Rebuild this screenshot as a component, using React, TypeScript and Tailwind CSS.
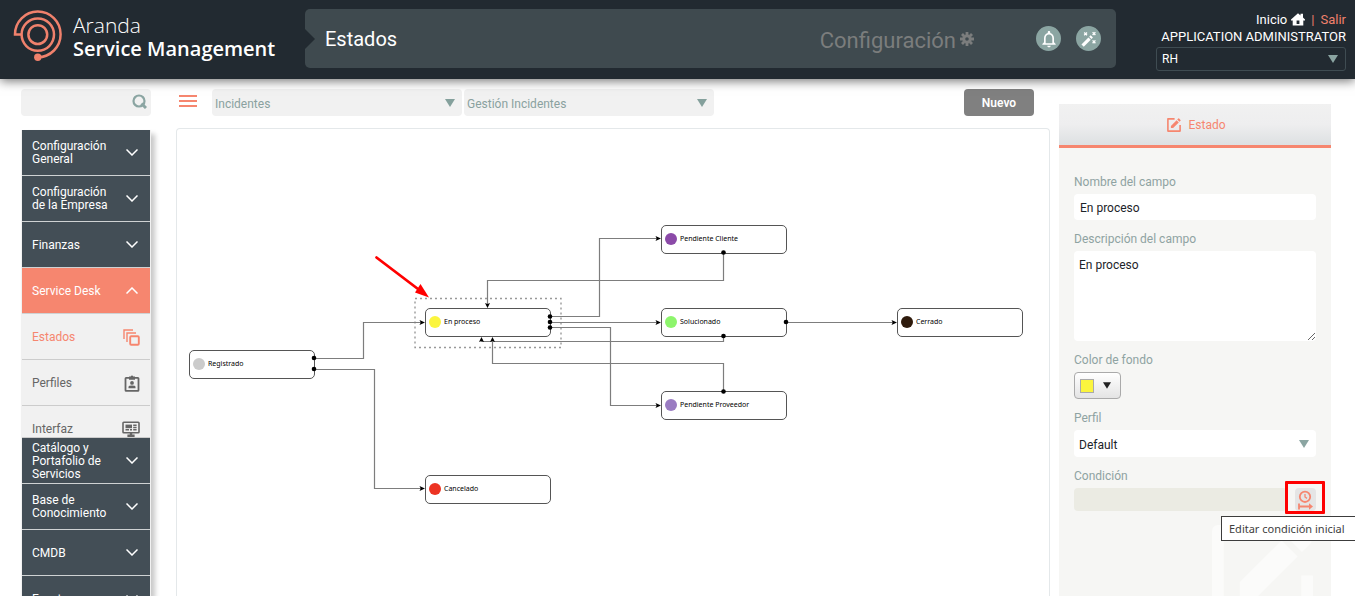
import React from "react";
import { MdNotificationsNone } from "react-icons/md";

type NodeDef = { label: string; color: string; place: string };

const nodes: NodeDef[] = [
  { label: "Registrado", color: "bg-[#cbcbcb]", place: "left-[12px] top-[221px]" },
  { label: "En proceso", color: "bg-[#fbf53e]", place: "left-[248px] top-[179px]" },
  { label: "Pendiente Cliente", color: "bg-[#8b4aa8]", place: "left-[484px] top-[96px]" },
  { label: "Solucionado", color: "bg-[#8df56c]", place: "left-[484px] top-[179px]" },
  { label: "Pendiente Proveedor", color: "bg-[#9a7cc2]", place: "left-[484px] top-[262px]" },
  { label: "Cerrado", color: "bg-[#2e1a0c]", place: "left-[720px] top-[179px]" },
  { label: "Cancelado", color: "bg-[#ec3323]", place: "left-[248px] top-[346px]" },
];

const edges = [
  "M137 229.5H186.5V193.5H246",
  "M137 240.5H197.5V359.5H246",
  "M373 187.5H422.5V109.5H482",
  "M373 193.5H482",
  "M373 198.5H433.5V276.5H482",
  "M546.5 124V151.5H310.5V177",
  "M546.5 207V212.5H304.5V210",
  "M546.5 262V234.5H315.5V210",
  "M609 193.5H718",
];

const dots: [number, number][] = [
  [137, 229], [137, 240], [373, 187.5], [373, 193], [373, 198.5],
  [546.5, 123.5], [546.5, 207], [546.5, 262.5], [609, 193],
];

const rightArrows: [number, number][] = [[248, 193.5], [248, 359.5], [484, 109.5], [484, 193.5], [484, 276.5], [720, 193.5]];

function Triangle({ className }: { className: string }) {
  return (
    <svg viewBox="0 0 10 8" className={className} aria-hidden="true">
      <path d="M0 0H10L5 8Z" fill="currentColor" />
    </svg>
  );
}

function Logo() {
  return (
    <svg viewBox="0 0 50 52" className="h-[52px] w-[50px] shrink-0 text-[#f0816c]" fill="none" stroke="currentColor" strokeWidth="2.5" aria-hidden="true">
      <circle cx="24.8" cy="25.6" r="9.4" />
      <circle cx="24.8" cy="25.6" r="16.2" />
      <path d="M8.600 25.600H2A22.800 22.800 0 1 1 24.800 48.200" />
      <circle cx="24.8" cy="48.2" r="3.700" fill="currentColor" stroke="none" />
    </svg>
  );
}

function Gear() {
  return (
    <svg viewBox="0 0 14 14" className="h-3.5 w-3.5" fill="none" stroke="currentColor" aria-hidden="true">
      <circle cx="7" cy="7" r="3.2" strokeWidth="2.8" />
      <path strokeWidth="2.8" d="M7 0V3M7 11V14M0 7H3M11 7H14M2 2L4.2 4.2M9.8 9.8L12 12M12 2L9.8 4.2M4.2 9.8L2 12" />
    </svg>
  );
}

function Wand() {
  return (
    <svg viewBox="0 0 16 16" className="h-4 w-4" fill="none" stroke="currentColor" aria-hidden="true">
      <path strokeWidth="3.2" d="M1.6 14.6L8.6 7.6" />
      <path strokeWidth="3.2" d="M9.3 6.9L10.8 5.4" />
      <path strokeWidth="1.3" d="M3.2 1.5L6 4.3M6 1.5L3.2 4.3M11.6 1.2L14.4 4M14.4 1.2L11.6 4M11.6 9.4L14.4 12.2M14.4 9.4L11.6 12.2" />
    </svg>
  );
}

function House() {
  return (
    <svg viewBox="0 0 14 13" className="h-[13px] w-3.5" fill="currentColor" aria-hidden="true">
      <path fillRule="evenodd" d="M7 0.300L9.500 2.400V0.800H12V4.600L14 6.400V7.400H12.300V12.500H1.700V7.400H0V6.400ZM5.600 7.400V11H8.400V7.400Z" />
    </svg>
  );
}

function EditIcon({ className }: { className: string }) {
  return (
    <svg viewBox="0 0 16 16" className={className} fill="none" stroke="currentColor" aria-hidden="true">
      <path strokeWidth="1.6" strokeLinejoin="round" d="M8.6 1.9H1.9V14.1H14.1V8" />
      <path fill="currentColor" stroke="none" d="M4.9 11.100V8.900L10.600 3.200L12.800 5.400L7.100 11.100ZM11.200 2.600L12.300 1.500Q12.700 1.100 13.100 1.500L14.500 2.900Q14.900 3.300 14.500 3.700L13.400 4.800Z" />
    </svg>
  );
}

function Chevron({ up }: { up?: boolean }) {
  return (
    <svg viewBox="0 0 12 7" className="h-[7px] w-3 shrink-0" fill="none" stroke="#fff" strokeWidth="1.5" aria-hidden="true">
      <path d={up ? "M0.5 6.500L6 1L11.5 6.500" : "M0.5 0.500L6 6L11.5 0.500"} />
    </svg>
  );
}

function CopiesIcon() {
  return (
    <svg viewBox="0 0 17 17" className="h-[17px] w-[17px]" fill="none" stroke="currentColor" strokeWidth="1.4" aria-hidden="true">
      <path d="M1 10V1H10M4 13V4H13" />
      <rect x="7.2" y="7.2" width="8.6" height="8.6" rx="1" strokeWidth="1.9" />
    </svg>
  );
}

function BadgeIcon() {
  return (
    <svg viewBox="0 0 16 17" className="h-[17px] w-4" fill="none" stroke="currentColor" aria-hidden="true">
      <rect x="1.5" y="2.800" width="13" height="13" rx="0.600" strokeWidth="1.800" />
      <path fill="currentColor" stroke="none" d="M5 1.600H6.600L8 0.200L9.400 1.600H11V4.800H5ZM4.500 13.200V12Q4.500 10.600 8 10.600Q11.500 10.600 11.500 12V13.200Z" />
      <circle cx="8" cy="7.900" r="1.900" fill="currentColor" stroke="none" />
    </svg>
  );
}

function MonitorIcon() {
  return (
    <svg viewBox="0 0 18 16" className="h-4 w-[18px]" fill="none" stroke="currentColor" aria-hidden="true">
      <rect x="1" y="1.200" width="16" height="10.600" rx="0.800" strokeWidth="1.600" />
      <path strokeWidth="3.600" d="M3.500 5.400H10" />
      <path strokeWidth="1.500" d="M3.500 8.800H7M8 8.800H10M11.200 4.300H14.600M11.200 6.500H14.600M11.200 8.800H14.600" />
      <path strokeWidth="2.400" d="M9 11.600V15M5.400 14.800H12.600" />
    </svg>
  );
}

function MenuButton({ label, open }: { label: string; open?: boolean }) {
  return (
    <button
      type="button"
      aria-expanded={!!open}
      className={
        "flex h-[46px] w-full shrink-0 items-center justify-between border-b border-[#cfd2d3] pl-2.5 pr-3 text-left text-xs leading-[13px] text-white " +
        (open ? "bg-[#f6866f]" : "bg-[#434e56]")
      }
    >
      <span className="w-20 pt-px">{label}</span>
      <Chevron up={open} />
    </button>
  );
}

function SubLink({ label, icon, active }: { label: string; icon: React.ReactNode; active?: boolean }) {
  return (
    <a
      href="#"
      className={
        "flex h-[46px] items-center justify-between border-b border-[#cccccc] pl-2.5 pr-2.5 pt-px text-xs " +
        (active ? "text-[#f6866f]" : "text-[#666666]")
      }
    >
      <span>{label}</span>
      {icon}
    </a>
  );
}

function ToolbarSelect({ label, value }: { label: string; value: string }) {
  return (
    <div className="relative w-[250px]">
      <select aria-label={label} className="h-[27px] w-full appearance-none rounded bg-[#f1f1f1] pl-[3px] pr-6 pt-0.5 text-xs text-[#8aa19f]">
        <option>{value}</option>
      </select>
      <Triangle className="pointer-events-none absolute right-[7px] top-2.5 h-2 w-2.5 text-[#84a09c]" />
    </div>
  );
}

function Diagram() {
  return (
    <section aria-label="Diagrama de estados" className="relative min-h-0 flex-1 overflow-hidden rounded-t-sm border border-b-0 border-[#e4e8ea] bg-white">
      {nodes.map((n) => (
        <div key={n.label} className={"absolute flex h-[29px] w-[126px] items-center gap-[3px] rounded-[5px] border border-[#555555] bg-white pb-px pl-[3px] text-[7px] text-black " + n.place}>
          <span className={"h-3 w-3 shrink-0 rounded-full " + n.color} />
          <span className="whitespace-nowrap pt-px font-['Noto_Sans',sans-serif]">{n.label}</span>
        </div>
      ))}
      <svg width="872" height="467" className="absolute left-0 top-0" fill="none" aria-hidden="true">
        <rect x="238" y="169.500" width="146" height="49" stroke="#999999" strokeWidth="1.400" strokeDasharray="2 3" />
        {edges.map((d) => (
          <path key={d} d={d} stroke="#7d7d7d" strokeWidth="1.2" />
        ))}
        {dots.map(([x, y]) => (
          <circle key={`${x}-${y}`} cx={x} cy={y} r="2.3" fill="#000" />
        ))}
        {rightArrows.map(([x, y]) => (
          <path key={`${x}-${y}`} d={`M${x} ${y}l-5.500 -2.500l1.200 2.500l-1.200 2.500Z`} fill="#000" />
        ))}
        <path fill="#000" d="M310.500 179l-2.500 -5l2.500 1l2.500 -1ZM304.500 208l-2.500 5l2.500 -1l2.500 1ZM315.500 208l-2.500 5l2.500 -1l2.500 1Z" />
        <path stroke="#f00" strokeWidth="2.800" strokeLinecap="round" d="M199.500 128.500L241 160" />
        <path fill="#f00" d="M252 168.500L238 163.500L243.500 155Z" />
      </svg>
    </section>
  );
}

const labelClass = "block text-xs leading-4 text-[#8fa3a2]";

export default function App() {
  return (
    <div className="flex h-screen flex-col overflow-hidden bg-white font-[Roboto,'Liberation_Sans',sans-serif]">
      <header className="z-10 flex h-[79px] shrink-0 bg-[#222a31] pl-[13px] pr-[9px] pt-[9px] shadow-[0_2px_10px_rgba(0,0,0,0.55)]">
        <div className="flex w-[292px] shrink-0 gap-2.5">
          <Logo />
          <div className="whitespace-nowrap pt-1 font-['Open_Sans',sans-serif] text-white">
            <div className="text-[21px] font-light leading-6">Aranda</div>
            <div className="text-xl font-semibold leading-6">Service Management</div>
          </div>
        </div>
        <div className="relative flex h-[59px] flex-1 items-center rounded-[5px] bg-[#3f4a4f] pl-5 pr-[15px] text-white">
          <svg viewBox="0 0 10 20" className="absolute left-0 top-5 h-5 w-2.5" aria-hidden="true">
            <path d="M0 0L10 10L0 20Z" fill="#222a31" />
          </svg>
          <h1 className="flex-1 text-xl leading-6">Estados</h1>
          <div className="mr-[62px] flex items-center gap-1 text-[#7b7d7d]">
            <span className="pt-1 text-[22px]">Configuración</span>
            <Gear />
          </div>
          <div className="flex gap-[15px]">
            <button type="button" aria-label="Notificaciones" className="grid h-[25px] w-[25px] place-items-center rounded-full bg-[#8ba5a2]">
              <MdNotificationsNone className="h-5 w-5" />
            </button>
            <button type="button" aria-label="Asistente" className="grid h-[25px] w-[25px] place-items-center rounded-full bg-[#8ba5a2]">
              <Wand />
            </button>
          </div>
        </div>
        <div className="ml-10 w-[190px] shrink-0 text-right text-[13px] leading-[17px] text-white">
          <div className="flex items-center justify-end gap-1 pt-0.5">
            <a href="#" className="flex items-center gap-1">
              Inicio <House />
            </a>
            <span className="px-0.5 text-[#f0816c]">|</span>
            <a href="#" className="text-[#f0816c]">Salir</a>
          </div>
          <div className="whitespace-nowrap">APPLICATION ADMINISTRATOR</div>
          <div className="relative mt-0.5">
            <select aria-label="Proyecto" className="h-6 w-full appearance-none rounded-[3px] border border-[#3f4c52] bg-[#222a31] pl-[5px] text-xs">
              <option>RH</option>
            </select>
            <Triangle className="pointer-events-none absolute right-2 top-2 h-2 w-2.5 text-[#8ba5a2]" />
          </div>
        </div>
      </header>

      <div className="flex min-h-0 flex-1 pl-[21px] pr-6">
        <aside className="flex w-[130px] shrink-0 flex-col pt-2.5">
          <div className="relative">
            <input type="search" aria-label="Buscar" className="h-[27px] w-full rounded bg-[#f1f1f1] pl-2 pr-6 text-xs" />
            <svg viewBox="0 0 15 15" className="pointer-events-none absolute right-1 top-[5px] h-[15px] w-[15px]" fill="none" stroke="#8ba5a2" aria-hidden="true">
              <circle cx="7" cy="7" r="5.500" strokeWidth="2.200" />
              <path d="M9.500 9.500L14 14" strokeWidth="3" />
            </svg>
          </div>
          <nav className="mt-3.5 flex min-h-0 flex-1 flex-col overflow-hidden border-x border-[#f1f1f1] shadow-[4px_4px_5px_rgba(0,0,0,0.22)]">
            <MenuButton label="Configuración General" />
            <MenuButton label="Configuración de la Empresa" />
            <MenuButton label="Finanzas" />
            <MenuButton label="Service Desk" open />
            <div className="h-[124px] shrink-0 overflow-hidden border-b border-[#cccccc] bg-[#f1f1f1]">
              <SubLink label="Estados" icon={<CopiesIcon />} active />
              <SubLink label="Perfiles" icon={<BadgeIcon />} />
              <SubLink label="Interfaz" icon={<MonitorIcon />} />
            </div>
            <MenuButton label="Catálogo y Portafolio de Servicios" />
            <MenuButton label="Base de Conocimiento" />
            <MenuButton label="CMDB" />
            <MenuButton label="Eventos" />
          </nav>
        </aside>

        <main className="ml-[25px] flex min-w-0 flex-1 flex-col pt-2.5">
          <div className="mb-3 flex items-start pl-[3px] pr-4">
            <button type="button" aria-label="Menú" className="mr-[15px] mt-1.5 flex h-3 w-[18px] flex-col justify-between">
              <span className="h-0.5 w-full bg-[#f6866f]" />
              <span className="h-0.5 w-full bg-[#f6866f]" />
              <span className="h-0.5 w-full bg-[#f6866f]" />
            </button>
            <div className="flex gap-0.5">
              <ToolbarSelect label="Tipo" value="Incidentes" />
              <ToolbarSelect label="Modelo" value="Gestión Incidentes" />
            </div>
            <button type="button" className="ml-auto h-[27px] w-[70px] rounded bg-[#808080] text-xs font-semibold text-white">Nuevo</button>
          </div>
          <Diagram />
        </main>

        <form className="relative ml-[9px] mt-[25px] flex w-[272px] shrink-0 flex-col bg-[#f6f6f4]">
          <div className="flex h-11 shrink-0 items-center justify-center gap-1.5 border-b-[3px] border-[#f6866f] bg-linear-to-b from-[#f1f1f1] via-[#eeeeef] to-[#dde0e2] pl-0.5 text-xs text-[#f6866f]">
            <EditIcon className="h-4 w-4" />
            Estado
          </div>
          <div className="pointer-events-none absolute inset-0 overflow-hidden">
            <EditIcon className="absolute -bottom-[38px] right-2.5 h-[117px] w-[117px] text-[#fbfbfa]" />
          </div>
          <div className="relative px-[15px] pt-[26px]">
            <label htmlFor="nombre" className={labelClass}>Nombre del campo</label>
            <input id="nombre" defaultValue="En proceso" className="mt-1 block h-[26px] w-full rounded bg-white px-1.5 pt-0.5 text-xs text-[#1c2329]" />
            <label htmlFor="descripcion" className={labelClass + " mt-[11px]"}>Descripción del campo</label>
            <textarea id="descripcion" defaultValue="En proceso" className="mt-1 block h-[90px] w-full resize rounded bg-white px-[5px] py-1.5 text-xs text-[#1c2329]" />
            <label htmlFor="color" className={labelClass + " mt-[11px]"}>Color de fondo</label>
            <button id="color" type="button" className="mt-1 flex h-[27px] w-[47px] items-center gap-[9px] rounded-sm border border-[#aaaaaa] bg-linear-to-b from-white to-[#e4e4e4] pl-[5px] text-[#222222]">
              <span className="h-3.5 w-3.5 border border-[#aaaaaa] bg-[#fbf53e]" />
              <Triangle className="h-[7px] w-2" />
            </button>
            <label htmlFor="perfil" className={labelClass + " mt-[11px]"}>Perfil</label>
            <div className="relative mt-1">
              <select id="perfil" className="h-[27px] w-full appearance-none rounded bg-white pl-[5px] pt-0.5 text-xs text-[#1c2329]">
                <option>Default</option>
              </select>
              <Triangle className="pointer-events-none absolute right-[7px] top-2.5 h-2 w-2.5 text-[#8ba5a2]" />
            </div>
            <label htmlFor="condicion" className={labelClass + " mt-[11px]"}>Condición</label>
            <div className="mt-1 flex gap-2">
              <input id="condicion" disabled className="h-[23px] min-w-0 flex-1 rounded bg-[#ebebe3]" />
              <div className="relative">
                <button type="button" aria-label="Editar condición inicial" className="grid h-[23px] w-[21px] place-items-center rounded bg-[#e5e5e5] text-[#f6866f]">
                  <svg viewBox="0 0 15 20" className="h-5 w-[15px]" fill="none" stroke="currentColor" aria-hidden="true">
                    <circle cx="7" cy="6.800" r="5.200" strokeWidth="1.800" />
                    <path d="M7 4V7L9 8.400" strokeWidth="1.300" />
                    <path d="M1 13.500V19.500M1.500 16.500H12.500" strokeWidth="1.800" />
                    <path d="M11 13.300L15 16.500L11 19.700Z" fill="currentColor" stroke="none" />
                  </svg>
                </button>
                <div className="pointer-events-none absolute -left-2.5 -top-[7px] h-[33px] w-10 rounded-[1px] border-[3px] border-[#fe0000]" />
                <div role="tooltip" className="absolute -left-[74px] top-7 w-[140px] whitespace-nowrap border border-[#3c3c3c] bg-white pl-[7px] font-['Noto_Sans',sans-serif] text-[11px] leading-[23px] text-[#404040]">
                  Editar condición inicial
                </div>
              </div>
            </div>
          </div>
        </form>
      </div>
    </div>
  );
}
